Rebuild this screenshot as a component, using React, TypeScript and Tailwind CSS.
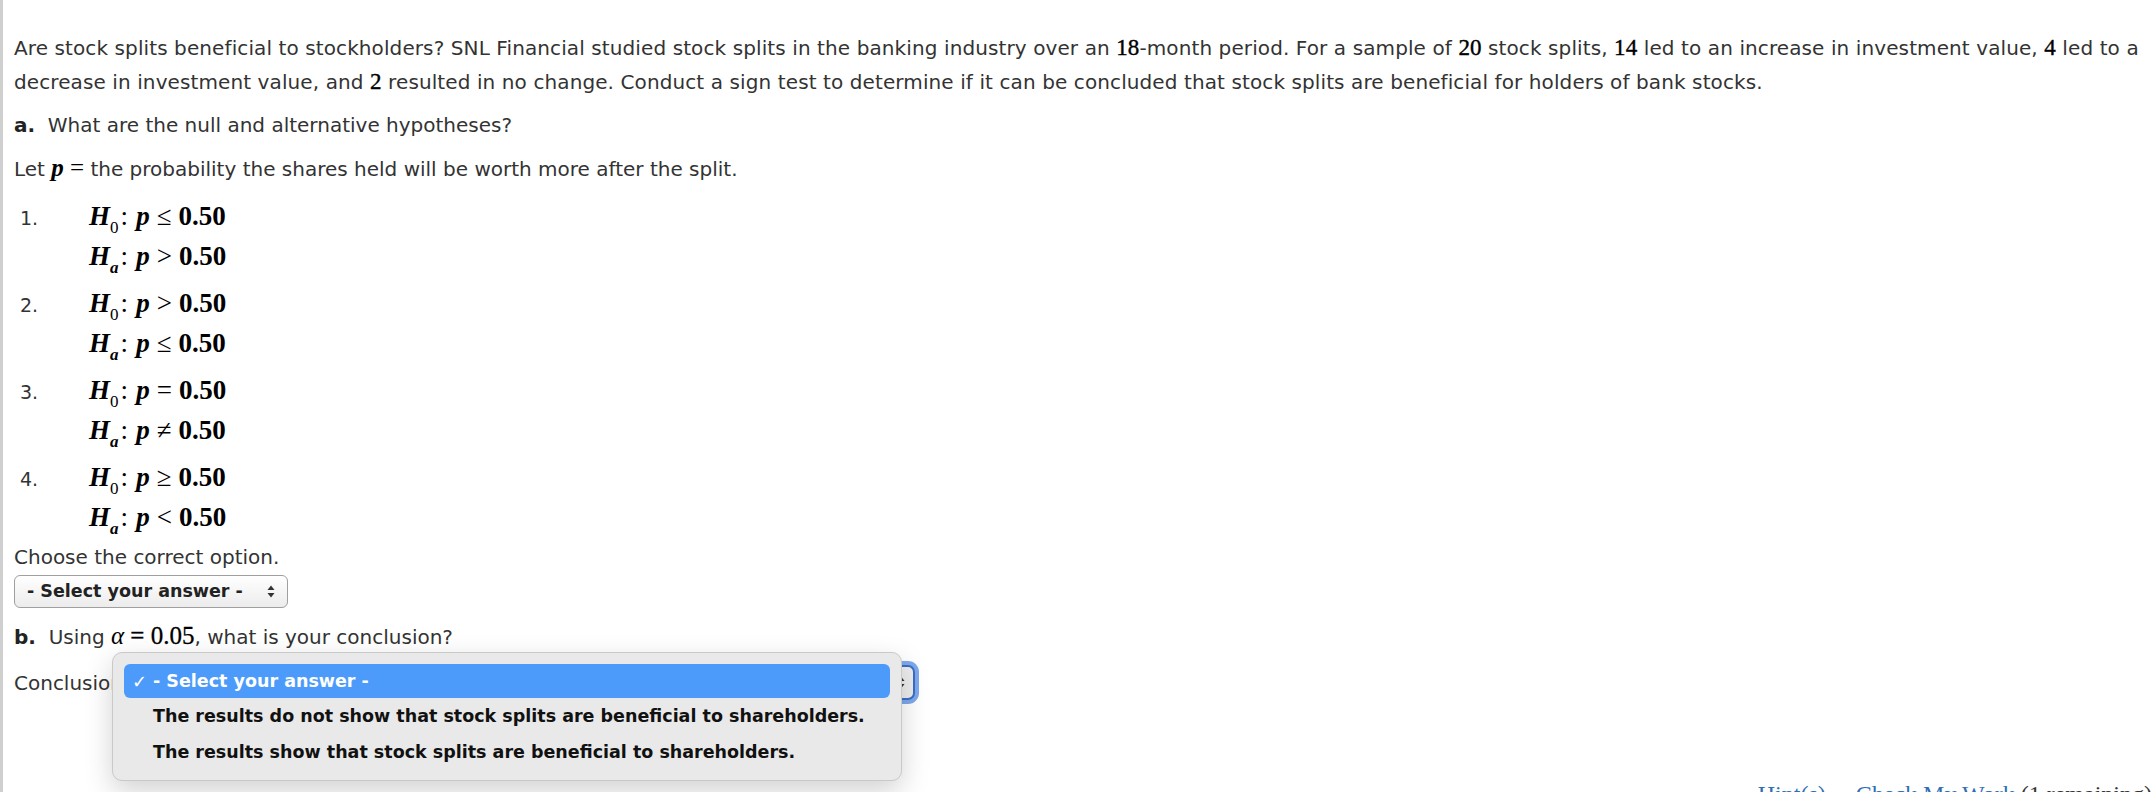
import React from "react";

function N({ children }: { children: React.ReactNode }) {
  return (
    <span className="font-['Liberation_Serif',serif] text-[23px] leading-none text-black [-webkit-text-stroke:0.4px]">
      {children}
    </span>
  );
}

function Rel({ children }: { children: React.ReactNode }) {
  return <span className="mx-[0.26em] font-normal">{children}</span>;
}

function Hyp({ sub, rel }: { sub: "0" | "a"; rel: string }) {
  return (
    <span className="font-['Liberation_Serif',serif] text-[27px] font-bold text-black">
      <i>H</i>
      {sub === "0" ? (
        <sub className="text-[17px] font-normal not-italic leading-none align-[-0.2em]">0</sub>
      ) : (
        <sub className="text-[17px] font-bold italic leading-none align-[-0.2em]">a</sub>
      )}
      <span className="ml-[2px] mr-[0.3em] font-normal">:</span>
      <i>p</i>
      <Rel>{rel}</Rel>
      <span>0.50</span>
    </span>
  );
}

function Item({ n, h0, ha }: { n: string; h0: string; ha: string }) {
  return (
    <div className="flex flex-col">
      <div className="flex h-[40px] items-baseline leading-[40px]">
        <span className="w-[75px] pl-[6px] text-[19px] text-[#333]">{n}</span>
        <Hyp sub="0" rel={h0} />
      </div>
      <div className="flex h-[40px] items-baseline leading-[40px]">
        <span className="w-[75px]"></span>
        <Hyp sub="a" rel={ha} />
      </div>
    </div>
  );
}

function UpDown() {
  return (
    <svg width="8" height="13" viewBox="0 0 8 13" className="shrink-0">
      <path d="M4 0.5 L7.5 5 L0.5 5 Z" fill="#333" />
      <path d="M4 12.5 L7.5 8 L0.5 8 Z" fill="#333" />
    </svg>
  );
}

export default function App() {
  return (
    <div className="min-h-[792px] h-[792px] overflow-hidden border-l-[3px] border-[#cfcfcf] bg-white pl-[11px] pt-[31px] font-['DejaVu_Sans',Verdana,sans-serif] text-[20px] text-[#333]">
      <p className="whitespace-nowrap leading-[34px] tracking-[0.1px]">
        Are stock splits beneficial to stockholders? SNL Financial studied stock splits in the banking industry over an{" "}
        <N>18</N>-month period. For a sample of <N>20</N> stock splits, <N>14</N> led to an increase in investment value, <N>4</N>{" "}
        led to a
        <br />
        decrease in investment value, and <N>2</N> resulted in no change. Conduct a sign test to determine if it can be concluded
        that stock splits are beneficial for holders of bank stocks.
      </p>

      <p className="mt-[9px] leading-[34px]">
        <span className="font-bold text-[#222]">a.</span>&nbsp; What are the null and alternative hypotheses?
      </p>

      <p className="mt-[10px] leading-[34px]">
        Let{" "}
        <span className="font-['Liberation_Serif',serif] text-[25px] font-bold italic leading-none text-black">p</span>
        <span className="font-['Liberation_Serif',serif] text-[25px] leading-none text-black"> = </span>
        the probability the shares held will be worth more after the split.
      </p>

      <div className="mt-[10px] flex flex-col gap-[7px]">
        <Item n="1." h0="≤" ha=">" />
        <Item n="2." h0=">" ha="≤" />
        <Item n="3." h0="=" ha="≠" />
        <Item n="4." h0="≥" ha="<" />
      </div>

      <p className="mt-[3px] leading-[34px]">Choose the correct option.</p>

      <div className="mt-[1px] flex h-[33px] w-[274px] items-center justify-between rounded-[6px] border border-[#9f9f9f] bg-gradient-to-b from-white to-[#ececec] pl-[12px] pr-[12px] shadow-[inset_0_1px_0_#fff]">
        <span className="text-[17.5px] font-bold text-[#222]">- Select your answer -</span>
        <UpDown />
      </div>

      <p className="mt-[12px] leading-[34px]">
        <span className="font-bold text-[#222]">b.</span>&nbsp; Using{" "}
        <span className="font-['Liberation_Serif',serif] text-[25px] italic leading-none text-black">α</span>
        <span className="font-['Liberation_Serif',serif] text-[25px] leading-none text-black [-webkit-text-stroke:0.3px]">
          {" "}
          = 0.05
        </span>
        , what is your conclusion?
      </p>

      <div className="relative mt-[9px] flex h-[39px] items-center">
        <span>Conclusion</span>
        <div className="ml-[8px] flex h-[35px] w-[784px] items-center justify-end rounded-[7px] border-2 border-[#3a6fc4] bg-[#eeeeee] pr-[8px] ring-[4px] ring-[#7ea9ee]">
          <UpDown />
        </div>

        <div className="absolute left-[98px] top-[-11px] z-10 flex w-[790px] flex-col rounded-[10px] border border-[#c9c9c9] bg-[#e9e9e9] px-[11px] pb-[10px] pt-[11px] shadow-[0_10px_28px_rgba(0,0,0,0.18)]">
          <div className="flex h-[34px] items-center rounded-[6px] bg-[#4c9bfb] pl-[8px] text-[17.5px] font-bold text-white">
            <span className="w-[21px] text-[18px] font-normal">✓</span>
            <span>- Select your answer -</span>
          </div>
          <div className="flex h-[36px] items-center pl-[29px] text-[17.5px] font-bold text-[#111]">
            The results do not show that stock splits are beneficial to shareholders.
          </div>
          <div className="flex h-[36px] items-center pl-[29px] text-[17.5px] font-bold text-[#111]">
            The results show that stock splits are beneficial to shareholders.
          </div>
        </div>
      </div>

      <div className="mt-[80px] flex justify-end gap-[30px] whitespace-nowrap pr-[4px] font-['Liberation_Serif',serif] text-[24px] leading-none">
        <span className="text-[#2f6db5]">Hint(s)</span>
        <span>
          <span className="text-[#2f6db5]">Check My Work</span>
          <span className="text-[#333]"> (1 remaining)</span>
        </span>
      </div>
    </div>
  );
}
